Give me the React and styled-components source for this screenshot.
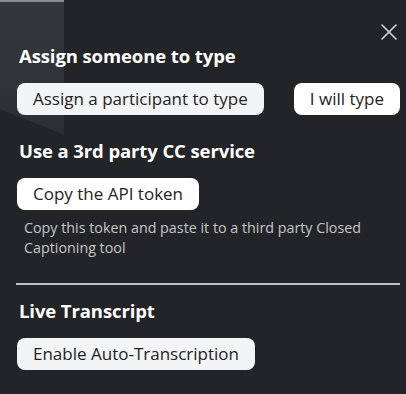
import React from "react";
import styled, { createGlobalStyle } from "styled-components";

const GlobalStyle = createGlobalStyle`
  html, body {
    margin: 0;
    padding: 0;
    background: #232427;
  }
  body {
    font-family: "Open Sans", "Noto Sans", sans-serif;
  }
`;

function App() {
  return (
    <>
      <GlobalStyle />
      <Panel>
        <Backdrop />
        <TopBar>
          <CloseButton aria-label="Close">
            <svg width="16" height="16" viewBox="0 0 16 16">
              <path d="M1 1 L15 15 M15 1 L1 15" stroke="#d6d6d6" strokeWidth="1.6" strokeLinecap="round" />
            </svg>
          </CloseButton>
        </TopBar>
        <Section>
          <Heading>Assign someone to type</Heading>
          <ButtonRow>
            <PillButton $tone="grey">Assign a participant to type</PillButton>
            <PillButton>I will type</PillButton>
          </ButtonRow>
        </Section>
        <Section $top={24}>
          <Heading>Use a 3rd party CC service</Heading>
          <ButtonRow>
            <PillButton>Copy the API token</PillButton>
          </ButtonRow>
          <Hint>Copy this token and paste it to a third party Closed Captioning tool</Hint>
        </Section>
        <Divider />
        <Section $top={14}>
          <Heading>Live Transcript</Heading>
          <ButtonRow>
            <PillButton $tone="grey">Enable Auto-Transcription</PillButton>
          </ButtonRow>
        </Section>
      </Panel>
    </>
  );
}

const Panel = styled.div`
  position: relative;
  width: 406px;
  height: 394px;
  box-sizing: border-box;
  padding: 0 6px 0 17px;
  background: #232427;
  overflow: hidden;
  display: flex;
  flex-direction: column;
`;

const Backdrop = styled.div`
  position: absolute;
  left: 0;
  top: 0;
  width: 64px;
  height: 140px;
  background: linear-gradient(180deg, #36373a 0%, #2e2f32 100%);
  border-top: 2px solid #8a8b90;
  box-sizing: border-box;
  clip-path: polygon(0 0, 100% 0, 100% 96%, 0 78%);
  z-index: 0;
`;

const TopBar = styled.div`
  position: relative;
  display: flex;
  justify-content: flex-end;
  height: 44px;
  padding-top: 24px;
  box-sizing: border-box;
`;

const CloseButton = styled.button`
  border: none;
  background: transparent;
  padding: 0;
  width: 16px;
  height: 16px;
  margin-right: 3px;
  cursor: pointer;
  svg {
    display: block;
  }
`;

const Section = styled.div`
  position: relative;
  display: flex;
  flex-direction: column;
  margin-top: ${(p) => p.$top || 0}px;
`;

const Heading = styled.h2`
  margin: 0 0 0 2px;
  font-size: 18.5px;
  font-weight: 700;
  line-height: 24px;
  color: #ffffff;
  letter-spacing: -0.1px;
`;

const ButtonRow = styled.div`
  display: flex;
  justify-content: space-between;
  margin-top: 15px;
`;

const PillButton = styled.button`
  height: 32px;
  padding: 0 16px;
  border: none;
  border-radius: 8px;
  background: ${(p) => (p.$tone === "grey" ? "#f3f4f6" : "#ffffff")};
  color: #232323;
  font-family: "Open Sans", "Noto Sans", sans-serif;
  font-size: 17px;
  line-height: 32px;
  white-space: nowrap;
  cursor: pointer;
`;

const Hint = styled.p`
  margin: 8px 0 0 7px;
  width: 360px;
  font-size: 14.3px;
  line-height: 20px;
  color: #c5c6c8;
`;

const Divider = styled.hr`
  position: relative;
  margin: 25px 0 0 -1px;
  border: none;
  height: 2px;
  background: #bfc0c2;
`;

export default App;
